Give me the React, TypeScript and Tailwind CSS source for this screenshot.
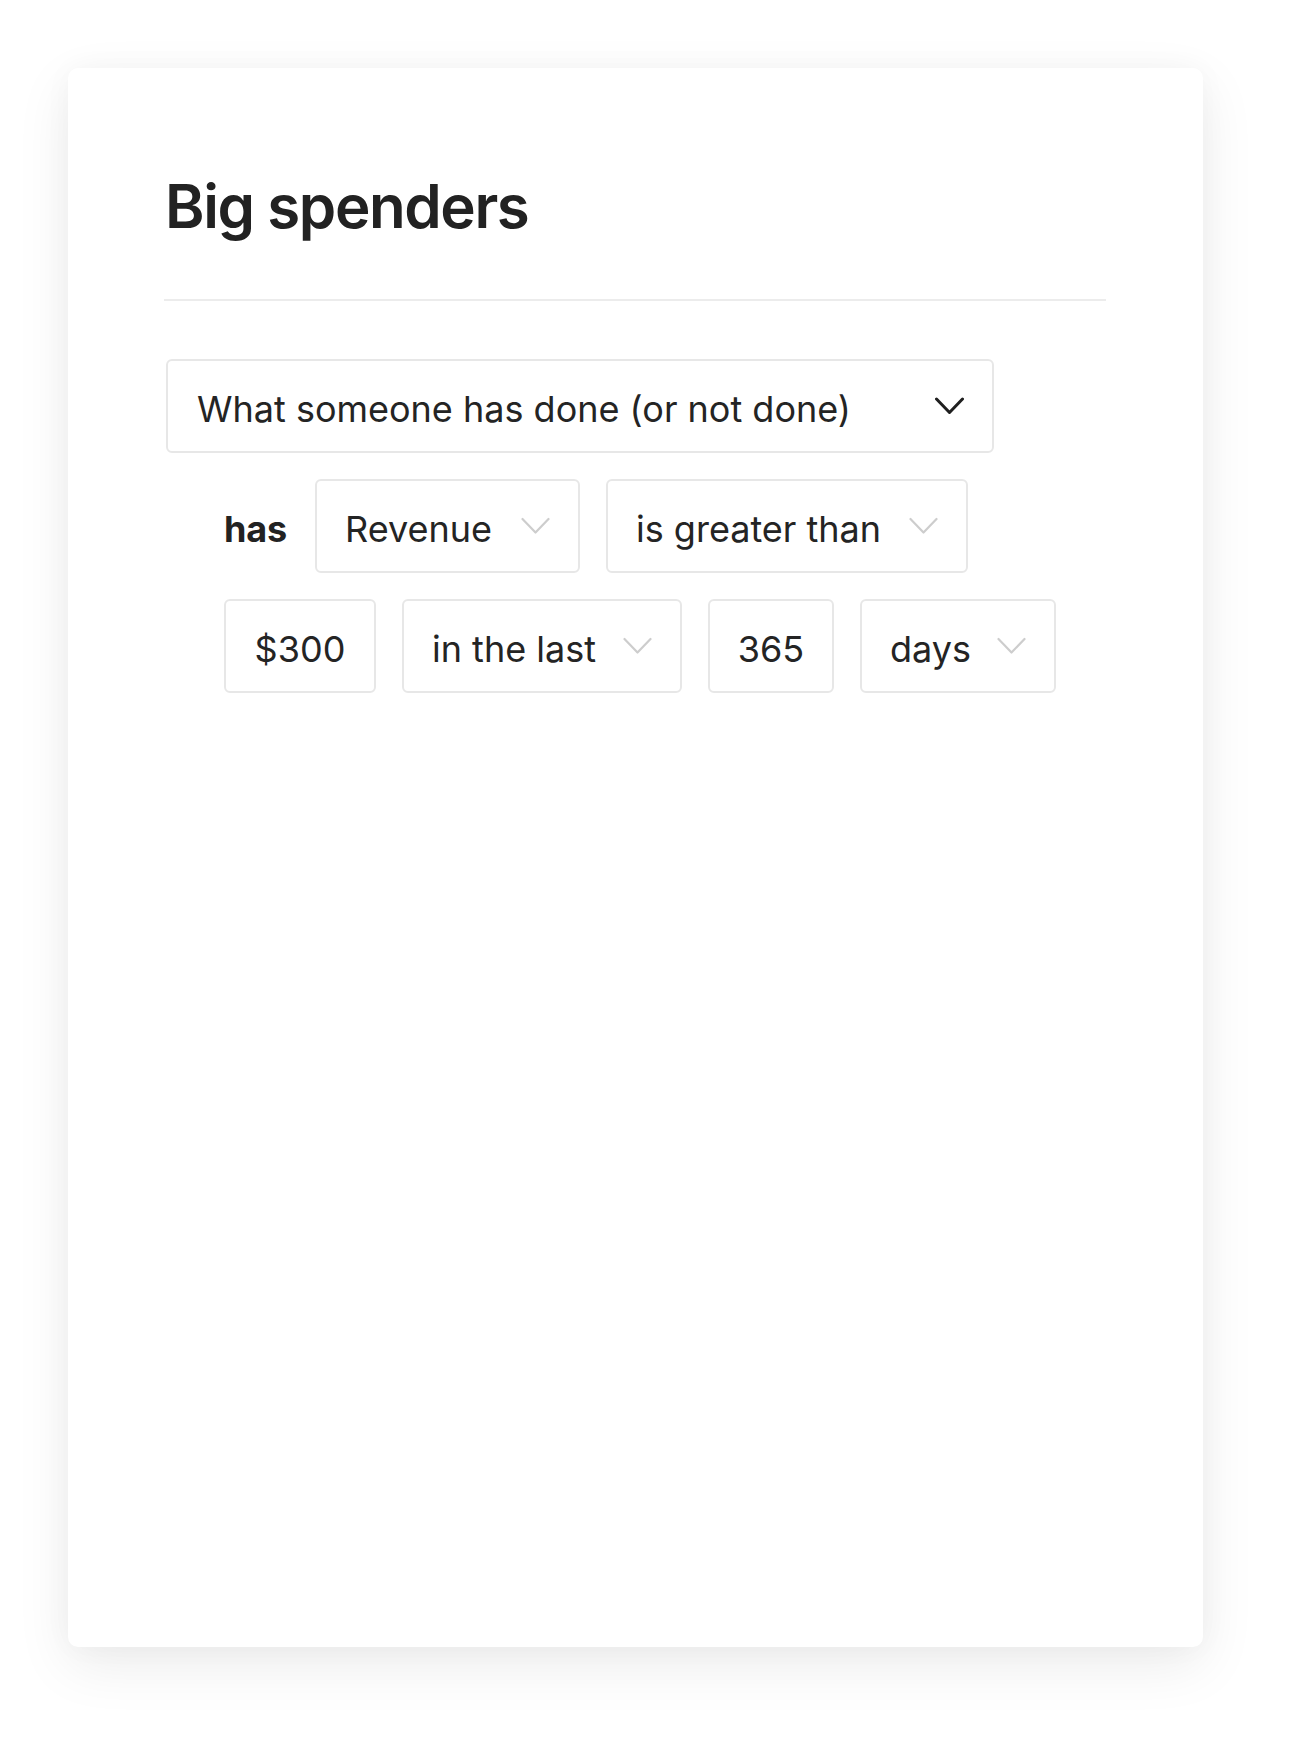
import React from "react";

function Chevron({ dark = false }: { dark?: boolean }) {
  return (
    <svg
      width="29"
      height="18"
      viewBox="0 0 29 18"
      fill="none"
      className="shrink-0"
    >
      <path
        d="M1.5 2 L14.5 15.5 L27.5 2"
        stroke={dark ? "#1f1f1f" : "#cdcdcd"}
        strokeWidth={dark ? 3 : 2.2}
        strokeLinecap="round"
        strokeLinejoin="round"
      />
    </svg>
  );
}

function Box({
  label,
  width,
  chevron = true,
  dark = false,
}: {
  label: string;
  width: string;
  chevron?: boolean;
  dark?: boolean;
}) {
  return (
    <div
      className={`${width} h-[94px] shrink-0 flex items-center ${
        chevron ? "justify-between" : "justify-center"
      } px-[28px] border-2 border-[#e7e7e7] rounded-[6px] bg-white`}
    >
      <span className="pt-[5px] text-[36px] leading-none text-[#242424] whitespace-nowrap">
        {label}
      </span>
      {chevron && <Chevron dark={dark} />}
    </div>
  );
}

export default function App() {
  return (
    <div
      className="w-full h-[1755px] bg-white pt-[68px] pl-[68px]"
      style={{ fontFamily: "Inter, 'Noto Sans', 'Liberation Sans', sans-serif" }}
    >
      <div className="w-[1135px] h-[1579px] bg-white rounded-[10px] shadow-[0_18px_55px_rgba(0,0,0,0.08),0_0_30px_rgba(0,0,0,0.03)] pl-[98px] pr-[97px] pt-[108px]">
        <h1 className="-ml-[1px] text-[60px] leading-[60px] font-semibold text-[#222222] tracking-[-1.4px]">
          Big spenders
        </h1>
        <div className="mt-[63px] w-[942px] -ml-[2px] h-[2px] bg-[#ececec]" />
        <div className="mt-[58px] flex flex-col gap-[26px]">
          <div className="w-[828px] h-[94px] flex items-center justify-between pl-[29px] pr-[28px] border-2 border-[#e7e7e7] rounded-[6px]">
            <span className="pt-[5px] text-[36px] leading-none text-[#242424] whitespace-nowrap">
              What someone has done (or not done)
            </span>
            <Chevron dark />
          </div>
          <div className="flex items-center gap-[26px] pl-[58px]">
            <span className="pt-[5px] w-[65px] text-[36px] leading-none font-bold text-[#222222] tracking-[-0.2px]">
              has
            </span>
            <Box label="Revenue" width="w-[265px]" />
            <Box label="is greater than" width="w-[362px]" />
          </div>
          <div className="flex items-center gap-[26px] pl-[58px]">
            <Box label="$300" width="w-[152px]" chevron={false} />
            <Box label="in the last" width="w-[280px]" />
            <Box label="365" width="w-[126px]" chevron={false} />
            <Box label="days" width="w-[196px]" />
          </div>
        </div>
      </div>
    </div>
  );
}
